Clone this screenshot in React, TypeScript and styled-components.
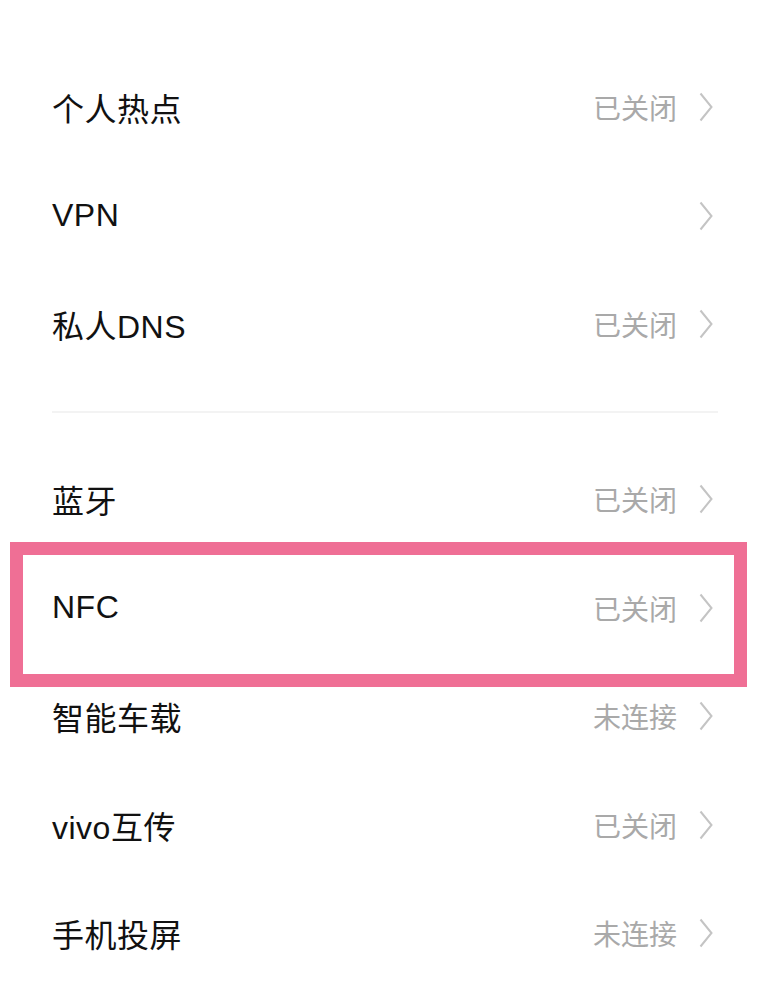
import styled, {createGlobalStyle} from 'styled-components'

const GlobalStyle = createGlobalStyle`
    html, body {
        margin: 0;
        padding: 0;
        background: #ffffff;
    }
    body {
        font-family: 'Liberation Sans', 'Noto Sans CJK SC', sans-serif;
    }
`

const Page = styled.div`
    width: 768px;
    height: 993px;
    overflow: hidden;
    background: #ffffff;
    padding-top: 53px;
    box-sizing: border-box;
`

const Group = styled.div`
    display: flex;
    flex-direction: column;
`

const Divider = styled.div`
    height: 2px;
    background: #f3f3f3;
    margin: 32px 50px 32px 52px;
`

const Row = styled.div<{$highlight?: boolean}>`
    position: relative;
    height: 108.6px;
    display: flex;
    align-items: center;
    justify-content: space-between;
    padding: 0 55px 0 52px;
    box-sizing: border-box;
    &::after {
        content: '';
        display: ${(p) => (p.$highlight ? 'block' : 'none')};
        position: absolute;
        top: -11px;
        bottom: -25px;
        left: 10px;
        right: 21px;
        border: 13px solid #ef6f95;
        box-sizing: border-box;
        pointer-events: none;
    }
`

const Label = styled.span`
    font-size: 32px;
    color: #111111;
    letter-spacing: 0.5px;
`

const Right = styled.div`
    display: flex;
    align-items: center;
    gap: 22px;
`

const Status = styled.span`
    font-size: 28px;
    color: #a9a9a9;
`

const Chevron = () => (
    <svg width="14" height="30" viewBox="0 0 14 30">
        <polyline points="1.5,1.5 12.5,15 1.5,28.5" fill="none" stroke="#c4c4c4" strokeWidth="2" />
    </svg>
)

type Item = {label: string; status?: string; highlight?: boolean}

const first: Item[] = [
    {label: '个人热点', status: '已关闭'},
    {label: 'VPN'},
    {label: '私人DNS', status: '已关闭'},
]

const second: Item[] = [
    {label: '蓝牙', status: '已关闭'},
    {label: 'NFC', status: '已关闭', highlight: true},
    {label: '智能车载', status: '未连接'},
    {label: 'vivo互传', status: '已关闭'},
    {label: '手机投屏', status: '未连接'},
]

const SettingRow = ({label, status, highlight}: Item) => (
    <Row $highlight={highlight}>
        <Label>{label}</Label>
        <Right>
            {status && <Status>{status}</Status>}
            <Chevron />
        </Right>
    </Row>
)

export default function App() {
    return (
        <>
            <GlobalStyle />
            <Page>
                <Group>
                    {first.map((item) => (
                        <SettingRow key={item.label} {...item} />
                    ))}
                </Group>
                <Divider />
                <Group>
                    {second.map((item) => (
                        <SettingRow key={item.label} {...item} />
                    ))}
                </Group>
            </Page>
        </>
    )
}
